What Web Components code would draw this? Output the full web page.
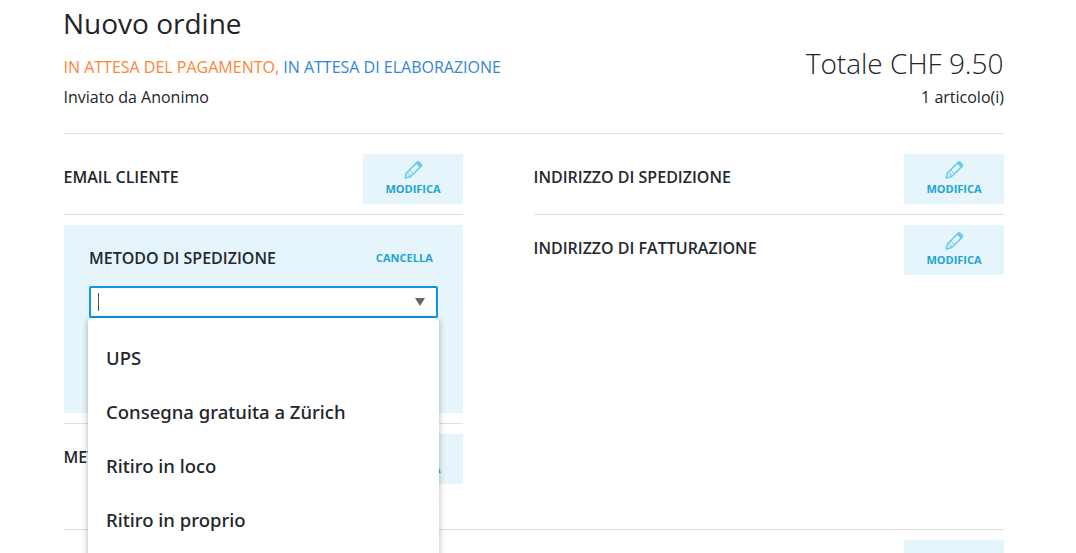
<!DOCTYPE html>
<html lang="it"><head><meta charset="utf-8"><title>Nuovo ordine</title>
<style>
html,body{margin:0;height:553px;overflow:hidden;background:#fff}
body{font-family:"Open Sans","Liberation Sans",sans-serif;color:#1f2328}
</style></head><body>
<order-page>
  <order-header slot="header"></order-header>
  <info-row slot="left" label="EMAIL CLIENTE"></info-row>
  <shipping-panel slot="left"></shipping-panel>
  <info-row slot="left" label="METODO DI PAGAMENTO" last></info-row>
  <info-row slot="right" label="INDIRIZZO DI SPEDIZIONE"></info-row>
  <info-row slot="right" label="INDIRIZZO DI FATTURAZIONE" last></info-row>
</order-page>
<script>
const def=(n,html,init)=>customElements.define(n,class extends HTMLElement{
  connectedCallback(){ if(this.shadowRoot)return; const r=this.attachShadow({mode:'open'}); r.innerHTML=html; init&&init.call(this,r);}
});
def('order-page',`<style>
:host{display:block;width:940px;padding:0 0 0 64px}
.cols{display:grid;grid-template-columns:399px 470px;column-gap:71px;padding-top:20px;border-top:1px solid #e0e0e0}
.col{display:flex;flex-direction:column;gap:10px;min-width:0}
.foot{display:flex;justify-content:flex-end;margin-top:34px;border-top:1px solid #e0e0e0;padding-top:10px}
.foot i{display:block;width:100px;height:50px;background:#e5f5fb}
</style>
<slot name="header"></slot>
<div class="cols"><div class="col"><slot name="left"></slot></div><div class="col"><slot name="right"></slot></div></div>
<div class="foot"><i></i></div>`);
def('order-header',`<style>
:host{display:flex;justify-content:space-between;height:133px;box-sizing:border-box;padding-top:4px}
h1{margin:0 0 0 -1px;font:400 28px/38px "Open Sans",sans-serif;color:#212529}
.st{margin:14px 0 0 -.5px;font:400 16px/22px "Open Sans",sans-serif;text-transform:uppercase}
.o{color:#ff8433}.b{color:#2f86d8}
.by{margin:8px 0 0 -.5px;font:400 16px/22px "Open Sans",sans-serif;color:#212529}
.r{text-align:right;padding-top:40px}
.t{font:300 28px/38px "Open Sans",sans-serif;color:#212529;margin-right:.5px}
.n{margin-top:4px;font:400 16px/22px "Open Sans",sans-serif;color:#212529}
</style>
<div><h1>Nuovo ordine</h1><div class="st"><span class="o">In attesa del pagamento,</span> <span class="b">In attesa di elaborazione</span></div><div class="by">Inviato da Anonimo</div></div>
<div class="r"><div class="t">Totale CHF 9.50</div><div class="n">1 articolo(i)</div></div>`);
def('edit-button',`<style>
:host{display:flex;flex-direction:column;align-items:center;width:100px;height:50px;box-sizing:border-box;padding-top:6px;background:#e5f5fb;color:#1ea5d0;font:700 11px/14px "Open Sans",sans-serif}
svg{display:block;width:20px;height:20px;margin-bottom:2px}
</style>
<svg viewBox="0 0 20 20" fill="none" stroke="#6ccbe8" stroke-linejoin="round"><path stroke-width="1.5" fill="#e5f5fb" d="M2.2 18l1.2-5L14 2.4l4 4L7.4 16.8z"/><path stroke-width="1" d="M4.4 12l4 4M6.6 9.8l4 4M5 14.5l1.8 1.8"/><path stroke-width="1.2" fill="#6ccbe8" d="M13.2 3.2l1.3-1.3a1.1 1.1 0 0 1 1.5 0l2.4 2.4a1.1 1.1 0 0 1 0 1.5l-1.3 1.3z"/></svg><span>MODIFICA</span>`);
def('info-row',`<style>
:host{display:flex;justify-content:space-between;align-items:center;height:61px;box-sizing:border-box;padding-bottom:10px;border-bottom:1px solid #e0e0e0;font:600 16px/22px "Open Sans",sans-serif;color:#24282d}
:host([last]){border-bottom-color:transparent}
.l{padding-bottom:4px;margin-left:-.5px}
</style><span class="l"></span><edit-button></edit-button>`,function(r){r.querySelector('.l').textContent=this.getAttribute('label')});
def('shipping-panel',`<style>
:host{display:block;position:relative;height:188px;margin-bottom:11px;box-sizing:border-box;background:#e5f5fb;padding:20px 25px 0;font-family:"Open Sans",sans-serif}
.h{display:flex;justify-content:space-between;align-items:center;height:26px;padding-right:5px}
.h b{font:600 16px/22px "Open Sans",sans-serif;color:#24282d}
.h a{font:700 11px/14px "Open Sans",sans-serif;color:#1ea5d0;letter-spacing:.05px}
.sel{display:flex;align-items:center;justify-content:space-between;box-sizing:border-box;width:349px;height:32px;margin-top:15px;padding:0 12px 0 7px;background:#fff;border:2px solid #0e96e4;border-radius:2px}
.caret{width:1px;height:18px;background:#555}
.arrow{width:0;height:0;margin-right:-1px;border:5px solid transparent;border-top:8px solid #666;border-bottom:0}
.menu{position:absolute;left:24px;top:93px;width:351px;height:300px;box-sizing:border-box;background:#fff;border-radius:4px;box-shadow:0 1px 6px rgba(0,0,0,.3);padding:13px 0 0 18px;z-index:5}
.menu div{height:54px;font:500 18.5px/54px "Noto Sans",sans-serif;color:#212529;white-space:nowrap}
.border{position:absolute;left:0;right:0;top:198px;border-top:1px solid #e0e0e0}
</style>
<div class="h"><b>METODO DI SPEDIZIONE</b><a>CANCELLA</a></div>
<div class="sel"><span class="caret"></span><span class="arrow"></span></div>
<div class="border"></div>
<div class="menu"><div>UPS</div><div>Consegna gratuita a Zürich</div><div>Ritiro in loco</div><div>Ritiro in proprio</div></div>`);
</script>
</body></html>
